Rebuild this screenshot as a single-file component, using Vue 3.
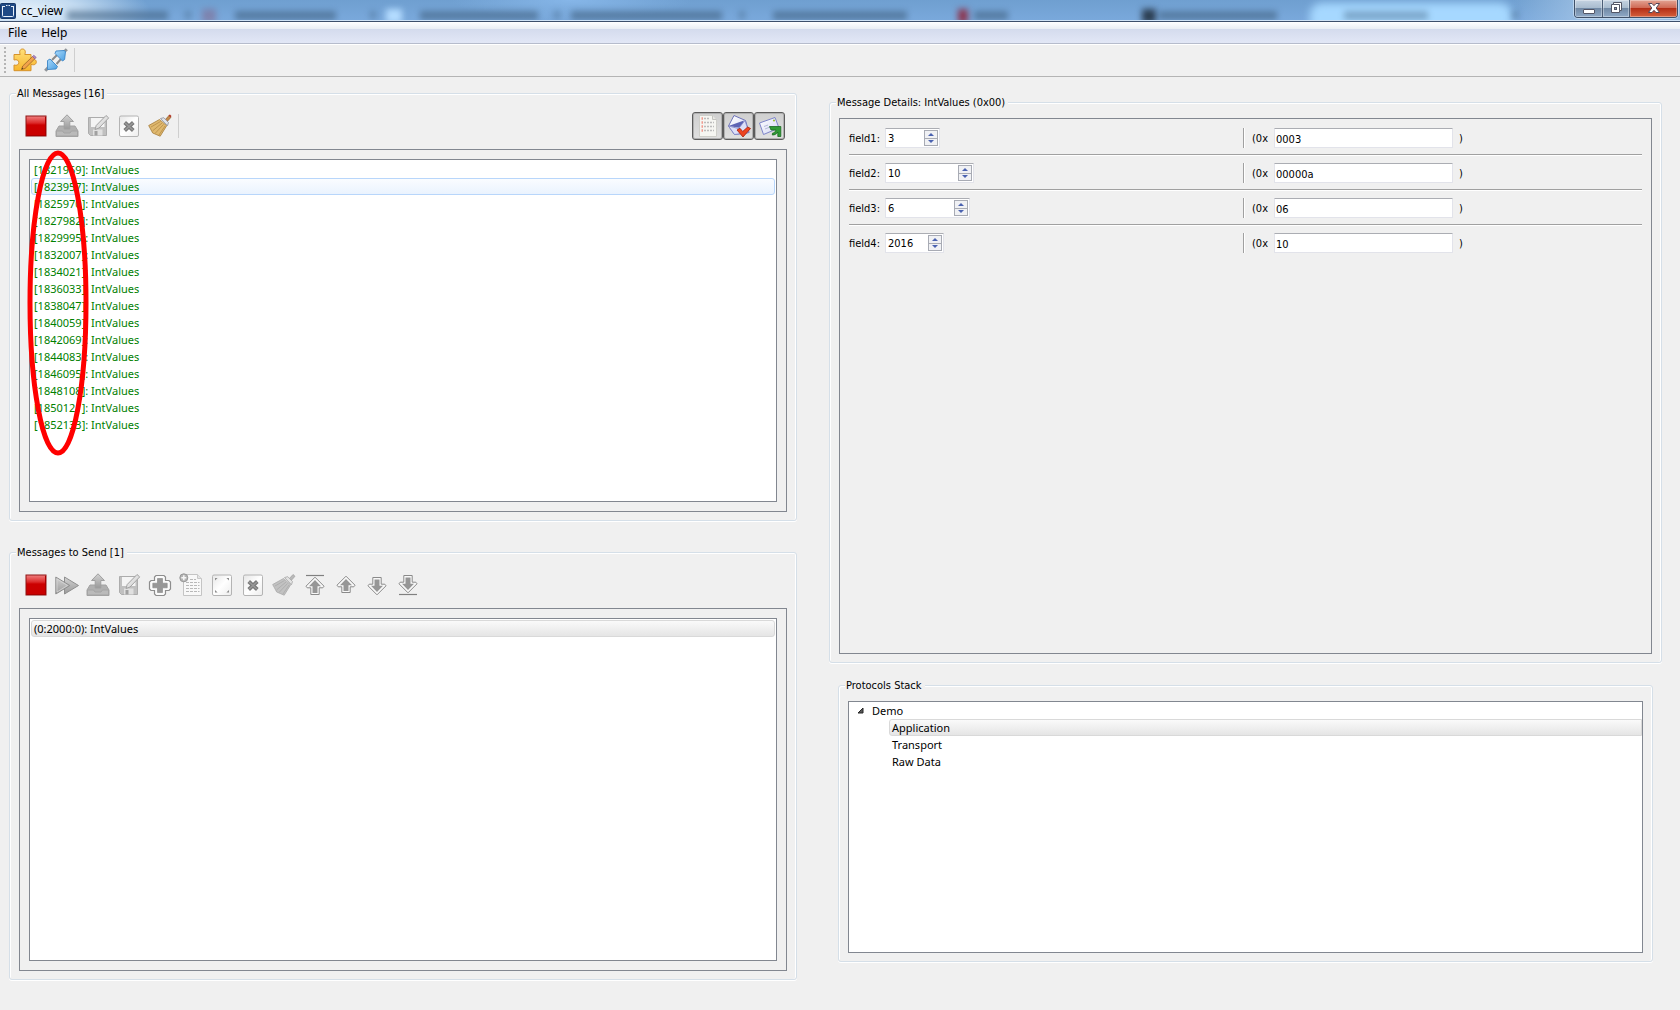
<script setup>
import { ref } from 'vue'

const stamps = [
  1821969, 1823957, 1825970, 1827982, 1829995, 1832007, 1834021, 1836033,
  1838047, 1840059, 1842069, 1844083, 1846095, 1848108, 1850121, 1852133,
]
const selected = ref(1)

const recvTools = [
  { icon: 'stop', label: 'Stop' },
  { icon: 'upload', label: 'Load messages' },
  { icon: 'save', label: 'Save messages' },
  { icon: 'delete', label: 'Delete message' },
  { icon: 'broom', label: 'Clear messages' },
]
const filters = [
  { icon: 'list', label: 'Show garbage' },
  { icon: 'mail-in', label: 'Show received' },
  { icon: 'mail-out', label: 'Show sent' },
]
const sendTools = [
  { icon: 'stop', label: 'Stop' },
  { icon: 'forward', label: 'Send all' },
  { icon: 'upload', label: 'Load messages' },
  { icon: 'save', label: 'Save messages' },
  { icon: 'plus', label: 'Add message' },
  { icon: 'sheet-add', label: 'Add raw' },
  { icon: 'edit', label: 'Edit message' },
  { icon: 'delete', label: 'Delete message' },
  { icon: 'broom-off', label: 'Clear messages' },
  { icon: 'top', label: 'Move to top' },
  { icon: 'up', label: 'Move up' },
  { icon: 'down', label: 'Move down' },
  { icon: 'bottom', label: 'Move to bottom' },
]
const fields = ref([
  { name: 'field1', value: '3', hex: '0003', size: 'w1' },
  { name: 'field2', value: '10', hex: '00000a', size: 'w2' },
  { name: 'field3', value: '6', hex: '06', size: 'w3' },
  { name: 'field4', value: '2016', hex: '10', size: 'w4' },
])
</script>

<template>
  <div class="window">
    <svg class="defs" width="0" height="0" aria-hidden="true">
      <defs>
        <linearGradient id="gRed" x1="0" y1="0" x2="0" y2="1">
          <stop offset="0" stop-color="#f08080" /><stop offset=".35" stop-color="#dc2a2a" /><stop offset=".45" stop-color="#cc0000" /><stop offset="1" stop-color="#c80000" />
        </linearGradient>
        <linearGradient id="gGrey" x1="0" y1="0" x2="0" y2="1">
          <stop offset="0" stop-color="#d2d2d2" /><stop offset="1" stop-color="#9a9a9a" />
        </linearGradient>
        <linearGradient id="gLight" x1="0" y1="0" x2="1" y2="1">
          <stop offset="0" stop-color="#e6e6e6" /><stop offset=".5" stop-color="#ffffff" /><stop offset="1" stop-color="#ececec" />
        </linearGradient>
        <linearGradient id="gPuzzle" x1="0" y1="0" x2="0" y2="1">
          <stop offset="0" stop-color="#ffe07a" /><stop offset="1" stop-color="#f7b52c" />
        </linearGradient>
        <linearGradient id="gBlue" x1="0" y1="0" x2="1" y2="1">
          <stop offset="0" stop-color="#a8d8fa" /><stop offset="1" stop-color="#4a9fe2" />
        </linearGradient>
        <linearGradient id="gMail" x1="0" y1="0" x2="1" y2="1">
          <stop offset="0" stop-color="#ffffff" /><stop offset="1" stop-color="#d2d6f4" />
        </linearGradient>
      </defs>
      <symbol id="i-stop" viewBox="0 0 24 24">
        <rect x="2" y="2" width="20" height="20" fill="url(#gRed)" stroke="#8e1414" />
        <path d="M3 21.500h18.500V3" fill="none" stroke="#a80000" />
      </symbol>
      <symbol id="i-upload" viewBox="0 0 24 24">
        <path d="M4 12h16l3 5v5.500H1V17z" fill="#b0b0b0" stroke="#a2a2a2" stroke-linejoin="round" />
        <path d="M1.500 17h6l1.500 2h6l1.500-2h6v5h-21z" fill="#bababa" stroke="#a4a4a4" />
        <path d="M12 .8l6.500 6.700h-3.700V15H9.200V7.500H5.500z" fill="url(#gGrey)" stroke="#a0a0a0" stroke-linejoin="round" />
      </symbol>
      <symbol id="i-save" viewBox="0 0 24 24">
        <path d="M2.500 3.500h18v18h-16l-2-2z" fill="#c0c0c0" stroke="#acacac" />
        <path d="M5 4h13.500v9H5z" fill="#f4f4f4" />
        <path d="M7 15.500h9.500v6H7z" fill="#e0e0e0" />
        <path d="M8.500 17h3v4.500h-3z" fill="#a0a0a0" />
        <path d="M9 15.500l1.200-4L20 1.500l2.700 2.400L13 14z" fill="#e0e0e0" stroke="#a2a2a2" stroke-linejoin="round" />
      </symbol>
      <symbol id="i-delete" viewBox="0 0 24 24">
        <rect x="2.500" y="2" width="19" height="20.500" rx="1.500" fill="url(#gLight)" stroke="#b4b4b4" />
        <path d="M7.700 8.500l8.600 8M16.300 8.500l-8.600 8" stroke="#7a7a7a" stroke-width="3.800" />
        <path d="M8.200 9l7.600 7M15.800 9l-7.600 7" stroke="#999999" stroke-width="1.400" />
      </symbol>
      <symbol id="i-broom" viewBox="0 0 24 24">
        <path d="M16.500 6.500l4.500-5 2 1.800-4.500 5z" fill="#c58a4a" stroke="#8a5a2b" stroke-width=".7" />
        <path d="M20.300 1.300l1.700-.8 1.500 1.500-.9 1.600z" fill="#b33a2a" />
        <path d="M11.500 5.500L.7 11.500l4 7.500 7.500 3.200 6.500-10.500z" fill="#dfb86e" stroke="#a67c3a" stroke-width=".8" />
        <path d="M12.500 7.500L3 13M14 9L4.500 17M15.500 10.500L7 19.500M17 12l-6 9" stroke="#b58c46" stroke-width=".8" />
        <path d="M12.500 4.500l7 7.200 1-3.200-4.700-4.800z" fill="#dfe3ea" stroke="#8b8f9a" stroke-width=".8" />
      </symbol>
      <symbol id="i-broom-off" viewBox="0 0 24 24">
        <path d="M16.500 6.500l4.500-5 2 1.800-4.500 5z" fill="#b9b9b9" stroke="#9c9c9c" stroke-width=".7" />
        <path d="M11.500 5.500L.7 11.500l4 7.500 7.500 3.200 6.500-10.500z" fill="#c2c2c2" stroke="#aaaaaa" stroke-width=".8" />
        <path d="M12.500 7.500L3 13M14 9L4.500 17M15.500 10.500L7 19.500M17 12l-6 9" stroke="#aaaaaa" stroke-width=".8" />
        <path d="M12.500 4.500l7 7.200 1-3.200-4.700-4.800z" fill="#e2e2e2" stroke="#a6a6a6" stroke-width=".8" />
      </symbol>
      <symbol id="i-forward" viewBox="0 0 24 24">
        <g fill="url(#gGrey)" stroke="#8f8f8f" stroke-linejoin="round">
          <path d="M9.500 4l14 8.500-14 8.500z" /><path d="M.8 4l14 8.500-14 8.500z" />
        </g>
        <path d="M2 6l10.500 6.500L2 19z" fill="none" stroke="#d8d8d8" stroke-width=".8" />
      </symbol>
      <symbol id="i-plus" viewBox="0 0 24 24">
        <path d="M8 2.500h8l1.500 1.500v3.500H21L22.500 9v7L21 17.500h-3.500V21L16 22.500H8L6.500 21v-3.500H3L1.500 16V9L3 7.500h3.500V4z" fill="#fafafa" stroke="#8d8d8d" stroke-width="1.200" />
        <path d="M9.500 5.500h5v4.700h4.700v4.600h-4.700v4.700h-5v-4.700H4.800v-4.600h4.700z" fill="#979797" stroke="#858585" stroke-width=".6" />
      </symbol>
      <symbol id="i-sheet-add" viewBox="0 0 24 24">
        <path d="M4.500 1.500h14l4 4v17h-18z" fill="#f8f8f8" stroke="#c4c4c4" />
        <path d="M18.500 1.500v4h4" fill="#e4e4e4" stroke="#c8c8c8" />
        <path d="M11 6.500h6M7 9.500h13.500M7 12.500h13.500M7 15.500h13.500M7 18.500h13.500" stroke="#b8b8b8" stroke-dasharray="3 1" />
        <circle cx="4.800" cy="4.800" r="4" fill="#b4b4b4" stroke="#969696" />
        <path d="M4.800 2.300v5M2.300 4.800h5" stroke="#f6f6f6" stroke-width="1.500" />
      </symbol>
      <symbol id="i-edit" viewBox="0 0 24 24">
        <rect x="2.500" y="2" width="19" height="20.500" rx="1.500" fill="url(#gLight)" stroke="#b4b4b4" />
        <g fill="#8c8c8c"><path d="M5 5h2.600L5 7.600zM19 5h-2.600L19 7.600zM5 19.500h2.600L5 16.900zM19 19.500h-2.600l2.600-2.600z" /></g>
      </symbol>
      <symbol id="i-up" viewBox="0 0 24 24">
        <path d="M12 3.200l9 9-1.200 1.600h-3.600v5.700H7.800v-5.700H4.200L3 12.200z" fill="#f8f8f8" stroke="#8a8a8a" stroke-linejoin="round" />
        <path d="M12 6l6 6.200h-3.500V18h-5v-5.800H6z" fill="#969696" />
      </symbol>
      <symbol id="i-down" viewBox="0 0 24 24">
        <path d="M12 21.800l9-9-1.200-1.600h-3.600V4.500H7.800v6.700H4.200L3 12.800z" fill="#f8f8f8" stroke="#8a8a8a" stroke-linejoin="round" />
        <path d="M12 19l6-6.200h-3.500V6.500h-5v6.300H6z" fill="#969696" />
      </symbol>
      <symbol id="i-top" viewBox="0 0 24 24">
        <path d="M3 2.500h18" stroke="#808080" stroke-width="1.200" />
        <path d="M12 4.200l9 9-1.200 1.600h-3.600v6.700H7.800v-6.700H4.200L3 13.200z" fill="#f8f8f8" stroke="#8a8a8a" stroke-linejoin="round" />
        <path d="M12 7l6 6.200h-3.500V20h-5v-6.800H6z" fill="#969696" />
      </symbol>
      <symbol id="i-bottom" viewBox="0 0 24 24">
        <path d="M3 21.500h18" stroke="#808080" stroke-width="1.200" />
        <path d="M12 19.800l9-9-1.200-1.600h-3.600V2.500H7.800v6.700H4.200L3 10.800z" fill="#f8f8f8" stroke="#8a8a8a" stroke-linejoin="round" />
        <path d="M12 17l6-6.200h-3.500V4.500h-5v6.300H6z" fill="#969696" />
      </symbol>
      <symbol id="i-list" viewBox="0 0 24 24">
        <path d="M3.500 1.500h13l4 4v17h-17z" fill="#f6f6f2" stroke="#cfcfca" />
        <path d="M16.500 1.500v4h4" fill="#e8e8e4" stroke="#c4c4c0" />
        <path d="M5.500 4.500h1.500M5.500 8.500h1.500M5.500 12.500h1.500M5.500 16.500h1.500" stroke="#f09a8e" stroke-width="2.500" />
        <path d="M8 4.500h6M8 8.500h10M8 12.500h10M8 16.500h10" stroke="#bcbcbc" stroke-width="1.500" stroke-dasharray="2 1" />
      </symbol>
      <symbol id="i-mail-in" viewBox="0 0 24 24">
        <path d="M1.500 12L7 1.500l11.500 5 3.500 12-14.500 2z" fill="url(#gMail)" stroke="#6d72b8" stroke-linejoin="round" />
        <path d="M1.500 12L17 6.500 14 14z" fill="#5d63b4" />
        <path d="M1.500 12l10 2.500 6.500-8 4 12-14.500 2z" fill="#dcdff8" stroke="#7a80c4" stroke-width=".8" stroke-linejoin="round" />
        <path d="M10 16l3-1.700 2.700 3.200 5-4.500 2.800 1.500-7.500 8.500z" fill="#ee4420" stroke="#a81c08" stroke-width=".8" stroke-linejoin="round" />
      </symbol>
      <symbol id="i-mail-out" viewBox="0 0 24 24">
        <path d="M1.500 9L17 3.500 21 14 5.500 20.500z" fill="url(#gMail)" stroke="#7d84c8" stroke-linejoin="round" />
        <path d="M6 12.500l4-1.500M7 15l5-2" stroke="#b4b8d8" />
        <circle cx="16" cy="6.500" r="1.100" fill="#9cc03a" />
        <path d="M11.500 12.500h11.300v10h-3v-4.500c-1.500 2.500-3.500 3-5.500 3l.2-1.800c1.800-.4 3-1.400 3.500-3.200h-5z" fill="#2f9a36" stroke="#166a1e" stroke-width=".8" stroke-linejoin="round" />
      </symbol>
      <symbol id="i-puzzle" viewBox="0 0 24 24">
        <path d="M1 6.500h6.200C5.800 3 7.500 1 9.500 1s3.700 2 2.300 5.500H18v5.200c3.500-1.300 5.300.3 5.300 2.300s-1.800 3.600-5.300 2.300v6.400H1v-5.700c3 1 4.800-.5 4.800-2.500S4 11 1 12z" fill="url(#gPuzzle)" stroke="#d6922a" stroke-linejoin="round" />
        <path d="M8.500 21.500l1.200-3.500L19.500 8.500l2.300 2.300L12 20.500z" fill="#f2a24a" stroke="#9a6424" stroke-width=".8" />
        <path d="M19.500 8.500l1.300-1.200 2.500 2.200-1.500 1.300z" fill="#b48ac8" stroke="#84609a" stroke-width=".7" />
        <path d="M8.500 21.500l.7-1.900 1.200 1.200z" fill="#5a4020" />
      </symbol>
      <symbol id="i-plug" viewBox="0 0 24 24">
        <path d="M1.200 22.800l3-3.200" stroke="#8f9499" stroke-width="3" />
        <path d="M19.500 4.500l3.300-3.300" stroke="#8f9499" stroke-width="3" />
        <path d="M8 12l5-5M12.500 16l4.500-5" stroke="#8a8a8a" stroke-width="2" />
        <path d="M3.500 12.500l2.500-1.500 7.500 7.500-1.500 2.500-8.500.5z" fill="url(#gBlue)" stroke="#3a84c6" stroke-width=".9" stroke-linejoin="round" />
        <path d="M12 3l8-.5 1.500 1-.9 8-2.100 1.500-7.500-7.500z" fill="url(#gBlue)" stroke="#3a84c6" stroke-width=".9" stroke-linejoin="round" />
      </symbol>
    </svg>

    <header class="titlebar">
      <div class="glass" aria-hidden="true">
        <i class="tab active"></i>
        <i class="smudge s1"></i><i class="smudge s2"></i><i class="smudge s3"></i><i class="smudge s4"></i>
        <i class="smudge s5"></i><i class="smudge s6"></i><i class="smudge s7"></i><i class="smudge s8"></i>
        <i class="spot red r1"></i><i class="spot white"></i><i class="spot red r2"></i><i class="spot dark"></i>
        <i class="spot sep d1"></i><i class="spot sep d2"></i><i class="spot sep d3"></i><i class="spot sep d4"></i><i class="spot sep d5"></i>
      </div>
      <svg class="app-icon" width="16" height="16" viewBox="0 0 16 16" aria-hidden="true">
        <rect x=".5" y=".5" width="15" height="15" rx="1" fill="#1f4a86" stroke="#17386a" />
        <path d="M2.500 3v9.500q0 1 1 1h9q1 0 1-1V3" fill="none" stroke="#e8f0fa" />
        <path d="M2.500 3.500h2.500M11 3.500h2.500M6 2.500h1.500M8.500 2.500H10" stroke="#e8f0fa" />
      </svg>
      <h1>cc_view</h1>
      <div class="controls">
        <button class="min" type="button" aria-label="Minimize">
          <svg width="14" height="8" viewBox="0 0 14 8"><rect x="1.500" y="2.500" width="11" height="4" rx=".5" fill="#fff" stroke="#535666" /></svg>
        </button>
        <button class="max" type="button" aria-label="Restore">
          <svg width="14" height="13" viewBox="0 0 14 13"><path d="M4.500 1.500h8v8h-2v2h-8v-8h2z" fill="#fff" stroke="#535666" /><path d="M4.500 3.500h6v6" fill="none" stroke="#535666" /><rect x="5.500" y="6.500" width="2" height="2" fill="#8ba0bb" stroke="#535666" /></svg>
        </button>
        <button class="close" type="button" aria-label="Close">
          <svg width="14" height="12" viewBox="0 0 14 12"><path d="M1.500 1.500h3.500l2 2.200 2-2.200h3.500L9.200 6l3.300 4.500H9L7 8.300l-2 2.200H1.500L4.800 6z" fill="#fff" stroke="#53485a" /></svg>
        </button>
      </div>
    </header>

    <nav class="menubar">
      <button type="button">File</button>
      <button type="button">Help</button>
    </nav>

    <div class="main-tools">
      <span class="grip"></span>
      <button class="tool" type="button" aria-label="Plugins"><svg width="24" height="24"><use href="#i-puzzle" /></svg></button>
      <button class="tool" type="button" aria-label="Connect"><svg width="24" height="24"><use href="#i-plug" /></svg></button>
      <span class="divider"></span>
    </div>

    <main>
      <div class="left">
        <fieldset>
          <legend>All Messages [16]</legend>
          <div class="tools">
            <button v-for="t in recvTools" :key="t.icon" class="tool" type="button" :aria-label="t.label">
              <svg width="24" height="24"><use :href="'#i-' + t.icon" /></svg>
            </button>
            <span class="divider"></span>
            <div class="toggles">
              <button v-for="t in filters" :key="t.icon" type="button" aria-pressed="true" :aria-label="t.label">
                <svg width="24" height="24"><use :href="'#i-' + t.icon" /></svg>
              </button>
            </div>
          </div>
          <div class="frame">
            <ul class="list">
              <li v-for="(s, i) in stamps" :key="s" class="received" :class="{ current: i === selected }" @click="selected = i">[{{ s }}]: IntValues</li>
            </ul>
            <svg class="mark" width="62" height="307" viewBox="0 0 62 307" aria-hidden="true">
              <ellipse cx="31" cy="153" rx="28" ry="150" fill="none" stroke="#ff0000" stroke-width="5" />
            </svg>
          </div>
        </fieldset>

        <fieldset>
          <legend>Messages to Send [1]</legend>
          <div class="tools">
            <button v-for="t in sendTools" :key="t.icon" class="tool" type="button" :aria-label="t.label">
              <svg width="24" height="24"><use :href="'#i-' + t.icon" /></svg>
            </button>
          </div>
          <div class="frame">
            <ul class="list">
              <li class="inactive">(0:2000:0): IntValues</li>
            </ul>
          </div>
        </fieldset>
      </div>

      <div class="right">
        <fieldset class="details">
          <legend>Message Details: IntValues (0x00)</legend>
          <div class="frame">
            <div v-for="f in fields" :key="f.name" class="field">
              <div class="half">
                <label :for="f.name">{{ f.name }}:</label>
                <div class="spin" :class="f.size">
                  <input :id="f.name" v-model="f.value" type="text" />
                  <span class="steps">
                    <button type="button" aria-label="Increase"><svg width="6" height="3" viewBox="0 0 6 3"><path d="M0 3l3-3 3 3z" fill="#4a62b0" /></svg></button>
                    <button type="button" aria-label="Decrease"><svg width="6" height="3" viewBox="0 0 6 3"><path d="M0 0l3 3 3-3z" fill="#4a62b0" /></svg></button>
                  </span>
                </div>
              </div>
              <div class="half hex">
                <label :for="f.name + '-hex'">(0x</label>
                <input :id="f.name + '-hex'" v-model="f.hex" class="hexbox" type="text" />
                <span>)</span>
              </div>
            </div>
          </div>
        </fieldset>

        <fieldset class="stack">
          <legend>Protocols Stack</legend>
          <ul class="tree">
            <li>
              <div class="node"><svg width="7" height="7" viewBox="0 0 7 7" aria-hidden="true"><path d="M6 1v5H1z" fill="#595959" stroke="#262626" stroke-linejoin="round" /></svg>Demo</div>
              <ul>
                <li class="inactive">Application</li>
                <li>Transport</li>
                <li>Raw Data</li>
              </ul>
            </li>
          </ul>
        </fieldset>
      </div>
    </main>
  </div>
</template>

<style>
body { margin: 0; background: #f0f0f0; }
</style>

<style scoped>
* { box-sizing: border-box; }
.window {
  min-height: 100vh;
  display: flex;
  flex-direction: column;
  background: #f0f0f0;
  color: #000;
  font: 11px/14px "DejaVu Sans Condensed", "DejaVu Sans", sans-serif;
}
.defs { position: absolute; }
button { padding: 0; border: 0; background: none; font: inherit; color: inherit; }
svg { display: block; }
ul { list-style: none; margin: 0; padding: 0; }

.titlebar {
  position: relative;
  display: flex;
  align-items: center;
  height: 22px;
  background: linear-gradient(#6f9fd0, #7aa9dc);
  border-bottom: 1px solid #3d4f6b;
  box-shadow: inset 0 -1px #cfe2f5;
}
.glass { position: absolute; inset: 0 0 1px; overflow: hidden;
  background:
    radial-gradient(ellipse 130px 40px at 20px 12px, #eaf3fb 0, #c3dbf1 45%, transparent 100%),
    radial-gradient(ellipse 120px 20px at 34% 0, #86b6e8, transparent),
    linear-gradient(90deg, transparent 90%, #a9c8e8 96%, #8fb6de); }
.glass i { position: absolute; }
.smudge { top: 11px; height: 9px; background: #40607f; opacity: .6; filter: blur(3px); }
.s1 { left: 4%; width: 6%; }
.s2 { left: 14%; width: 6%; }
.s3 { left: 25%; width: 7%; }
.s4 { left: 34%; width: 9%; }
.s5 { left: 46%; width: 8%; }
.s6 { left: 58%; width: 2%; }
.s7 { left: 69%; width: 7%; }
.s8 { left: 80%; width: 5%; opacity: .4; }
.tab.active { left: 78%; width: 12%; top: 3px; height: 30px; border-radius: 12px; background: #a6d8ff; filter: blur(4px); }
.spot { top: 9px; width: 10px; height: 14px; filter: blur(3px); }
.red { background: #8c3550; }
.r1 { left: 12%; width: 14px; opacity: .3; }
.r2 { left: 57%; }
.white { left: 23%; width: 16px; background: #b4dcff; }
.dark { left: 68%; width: 14px; background: #2c3e52; }
.sep { width: 6px; background: #456788; opacity: .5; top: 11px; height: 8px; }
.d1 { left: 11%; }
.d2 { left: 22%; }
.d3 { left: 33%; }
.d4 { left: 44%; }
.d5 { left: 90%; }
.app-icon { position: relative; }
h1 { position: relative; margin: 0 0 0 5px; font: 12px/20px "Noto Sans", sans-serif; }
.controls {
  position: relative;
  align-self: flex-start;
  display: flex;
  margin: 0 2px 0 auto;
  height: 18px;
  border: 1px solid #3f5068;
  border-top: 0;
  border-radius: 0 0 4px 4px;
  box-shadow: 0 0 0 1px #bcd5ee;
  overflow: hidden;
}
.controls button {
  display: flex;
  align-items: center;
  justify-content: center;
  padding-bottom: 2px;
  background: linear-gradient(#c5d3e2, #a9bccf 45%, #7189a5 50%, #8fa9c6);
  box-shadow: inset 0 0 0 1px rgba(255, 255, 255, .35);
}
.controls .min { width: 28px; padding: 4px 0 0; border-right: 1px solid #4b5d76; }
.controls .max { width: 27px; border-right: 1px solid #4b5d76; }
.controls .close { width: 47px; background: linear-gradient(#e3a494, #d06b56 45%, #b42f17 50%, #d5603c); }

.menubar {
  display: flex;
  height: 22px;
  background: linear-gradient(#ffffff, #e9edf4 7px, #d4dbed 7px, #e2e7f6);
  border-bottom: 1px solid #b6bccc;
  box-shadow: 0 1px #fff;
  padding-left: 1px;
}
.menubar button { padding: 0 7px; font: 12px/22px "Noto Sans", sans-serif; }

.main-tools {
  display: flex;
  align-items: center;
  height: 33px;
  border-bottom: 1px solid #b4b4b4;
  padding-left: 4px;
}
.grip { width: 2px; height: 26px; margin-right: 3px; background: repeating-linear-gradient(#b4b4b4 0 2px, transparent 2px 4px); }
.tool { width: 31px; height: 31px; display: flex; align-items: center; justify-content: center; }
.divider { width: 1px; height: 24px; margin-left: 3px; background: #cfcfcf; }

main { flex: 1; display: flex; gap: 32px; padding: 0 18px 0 9px; }
.left { flex: 788 1 0; min-width: 0; display: grid; grid-template-rows: 1fr 1fr; gap: 24px; padding: 9px 0 30px; }
.right { flex: 833 1 0; min-width: 0; display: grid; grid-template-rows: 2fr 1fr; gap: 15px; padding: 18px 0 48px; }

fieldset {
  min-width: 0;
  display: flex;
  flex-direction: column;
  margin: 0;
  padding: 0 9px 8px;
  border: 1px solid #d5dfe8;
  border-radius: 3px;
  box-shadow: inset 1px 1px #fff, inset -1px 0 #fff, 0 1px #fff;
}
legend { height: 14px; margin-left: -3px; padding: 0 3px 0 1px; background: #f0f0f0; line-height: 16px; }
.tools { display: flex; align-items: center; height: 49px; padding: 2px 2px 0 1px; }
.toggles { display: flex; margin-left: auto; }
.toggles button {
  width: 31px;
  height: 28px;
  display: flex;
  align-items: center;
  justify-content: center;
  border: 1px solid #5c5c5c;
  border-radius: 3px;
  background: linear-gradient(#cfcfcf, #e0e0e0);
  box-shadow: inset 0 0 0 1px #b0b0b0;
}
.frame { position: relative; flex: 1; display: flex; padding: 9px; border: 1px solid #828790; }
.list, .tree { flex: 1; padding: 1px; background: #fff; border: 1px solid #828790; font: 11px/15px "Noto Sans", sans-serif; }
.list li { height: 17px; padding: 0 2px; border: 1px solid transparent; border-radius: 3px; cursor: default; }
.received { color: #008000; }
.list .current { border-color: #b8d6fb; background: linear-gradient(#fafcff, #eaf3fe); }
.mark { position: absolute; left: 7px; top: 0; pointer-events: none; }
.list .inactive, .tree .inactive { border-color: #d9d9d9; background: linear-gradient(#fafafa, #e5e5e5); }

.details { padding-top: 9px; }
.details .frame { flex-direction: column; }
.field { display: flex; height: 27px; margin-bottom: 8px; border-bottom: 1px solid #a0a0a0; box-shadow: 0 1px #fff; }
.field:last-child { border-color: transparent; box-shadow: none; }
.half { flex: 1; display: flex; height: 20px; line-height: 22px; }
.half:first-child label { width: 36px; white-space: nowrap; }
.hex { margin-left: 4px; padding-left: 8px; border-left: 1px solid #a0a0a0; box-shadow: inset 1px 0 #fff; }
.hex label { width: 22px; }
.hex span { margin-left: 6px; }
.spin, .hexbox { height: 20px; border: 1px solid #e2e3ea; border-top-color: #abadb3; border-radius: 1px; background: #fff; }
.hexbox { width: 179px; padding: 2px 1px 0; font: inherit; color: inherit; }
.spin { display: flex; padding: 1px 1px 1px 2px; }
.spin input { flex: 1; min-width: 0; padding: 2px 0 0; border: 0; background: none; font: inherit; color: inherit; }
.spin input, .hexbox { line-height: 14px; }
.w1 { width: 55px; }
.w2 { width: 89px; }
.w3 { width: 85px; }
.w4 { width: 59px; }
.steps { display: flex; flex-direction: column; width: 14px; border: 1px solid #a8abb4; }
.steps button { flex: 1; display: flex; align-items: center; justify-content: center; background: #f0f1f4; }
.steps button + button { border-top: 1px solid #a8abb4; }

.stack { margin: 0 9px; padding-top: 9px; }
.tree { padding: 0; }
.node { display: flex; align-items: center; gap: 8px; height: 17px; padding-left: 8px; }
.tree li li { height: 17px; margin-left: 40px; padding: 0 2px; border: 1px solid transparent; border-radius: 3px 0 0 3px; }
</style>
